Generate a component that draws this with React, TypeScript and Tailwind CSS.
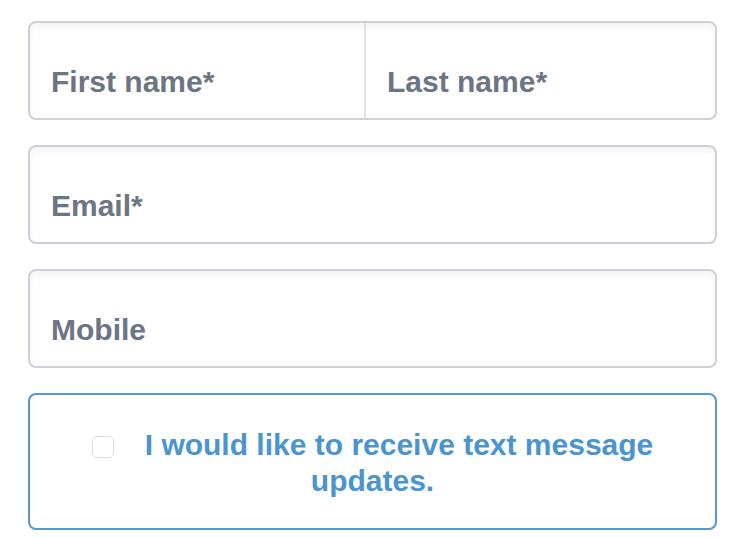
export default function App() {
  const field =
    "rounded-[8px] border-2 border-[#cdd0d6] bg-white shadow-[inset_0_4px_6px_rgba(30,40,80,0.05)]";
  const label =
    "block pl-[21px] pt-[41px] pb-[18px] text-[30px] leading-[36px] font-bold text-[#6b7583]";

  return (
    <div
      className="min-h-screen bg-white pt-[21px]"
      style={{ fontFamily: '"Liberation Sans", Arial, sans-serif' }}
    >
      <div className="ml-[28px] flex w-[689px] flex-col gap-[25px]">
        {/* NAME ROW */}
        <div className={`${field} flex`}>
          <div className="w-[336px] border-r-2 border-[#e0e1e5]">
            <span className={label}>First name*</span>
          </div>
          <div className="flex-1">
            <span className={label}>Last name*</span>
          </div>
        </div>

        <div className={field}>
          <span className={label}>Email*</span>
        </div>

        <div className={field}>
          <span className={label}>Mobile</span>
        </div>

        {/* SMS OPT-IN */}
        <div className="rounded-[8px] border-2 border-[#5797cc] bg-white pt-[32px] pb-[29px] text-center text-[30px] leading-[36px] font-bold text-[#4a94cf]">
          <span className="mr-[31px] inline-block h-[22px] w-[22px] rounded-[5px] border border-[#dcdcdc] bg-white align-[-3px]"></span>
          I would like to receive text message updates.
        </div>
      </div>
    </div>
  );
}
